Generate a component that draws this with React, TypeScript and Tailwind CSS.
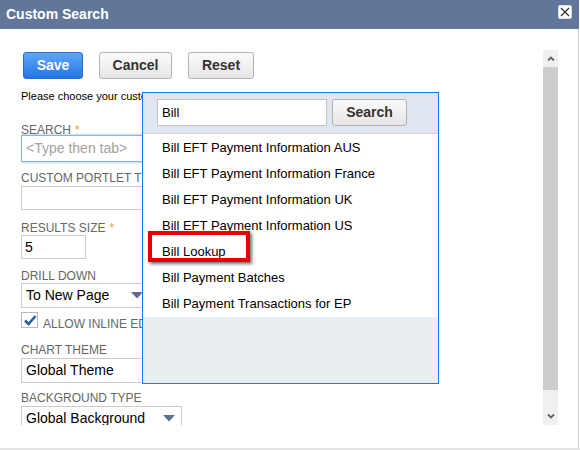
import React from "react";

const Label = ({ children, star = false, className = "" }: { children: React.ReactNode; star?: boolean; className?: string }) => (
  <div className={`text-[12px] leading-[12px] text-[#666666] uppercase whitespace-nowrap ${className}`}>
    {children}
    {star && <span className="text-[#e6a020] ml-[4px]">*</span>}
  </div>
);

const Arrow = () => (
  <svg width="12" height="7" viewBox="0 0 12 7" className="shrink-0">
    <path d="M0 0 L12 0 L6 6.5 Z" fill="#5b7090" />
  </svg>
);

const Select = ({ value, width, className = "" }: { value: string; width: string; className?: string }) => (
  <div className={`${width} h-[25px] border border-[#cccccc] bg-white flex items-center justify-between pl-[4px] pr-[6px] text-[14px] text-black ${className}`}>
    <span className="whitespace-nowrap">{value}</span>
    <Arrow />
  </div>
);

const items = [
  "Bill EFT Payment Information AUS",
  "Bill EFT Payment Information France",
  "Bill EFT Payment Information UK",
  "Bill EFT Payment Information US",
  "Bill Lookup",
  "Bill Payment Batches",
  "Bill Payment Transactions for EP",
];

export default function App() {
  return (
    <div className="w-[580px] h-[450px] bg-white overflow-hidden flex flex-col font-['Liberation_Sans',Arial,sans-serif]">
      <div className="w-[579px] h-[448px] flex flex-col">
        <div className="h-[29px] shrink-0 bg-[#607799] flex justify-between pl-[6px] pr-[7px]">
          <span className="text-white font-bold text-[14px] leading-[29px]">Custom Search</span>
          <div className="mt-[5px] w-[14px] h-[14px] bg-white rounded-[2px] border border-[#d8dde5] flex items-center justify-center">
            <svg width="10" height="10" viewBox="0 0 10 10">
              <path d="M1 1 L9 9 M9 1 L1 9" stroke="#333" strokeWidth="1.3" />
            </svg>
          </div>
        </div>
        <div className="flex-1 border-r border-[#cfcfcf] flex pt-[21px] pl-[21px] pr-[20px] relative">
          <div className="flex-1 h-[375px] overflow-hidden">
            <div className="flex gap-[16px] mt-[2px] ml-[2px]">
              <button className="w-[60px] h-[27px] rounded-[3px] border border-[#2a6cd0] bg-gradient-to-b from-[#5ea6f8] to-[#2476e6] text-white font-bold text-[14px]">
                Save
              </button>
              <button className="w-[73px] h-[27px] rounded-[3px] border border-[#b5b5b5] bg-gradient-to-b from-[#fbfbfb] to-[#e6e6e6] text-[#333] font-bold text-[14px]">
                Cancel
              </button>
              <button className="w-[66px] h-[27px] rounded-[3px] border border-[#b5b5b5] bg-gradient-to-b from-[#fbfbfb] to-[#e6e6e6] text-[#333] font-bold text-[14px]">
                Reset
              </button>
            </div>
            <div className="mt-[11px] text-[11px] leading-[13px] text-black whitespace-nowrap">
              Please choose your custom search form below.
            </div>

            <Label star className="mt-[21px]">Search</Label>
            <div className="mt-[-1px] w-[300px] h-[27px] border border-[#86b4ea] shadow-[0_0_3px_#8fbcf0] bg-white flex items-center pl-[4px] text-[14px] text-[#a3a3a3]">
              &lt;Type then tab&gt;
            </div>

            <Label className="mt-[10px]">Custom Portlet Title</Label>
            <div className="mt-[2px] w-[300px] h-[24px] border border-[#cccccc] bg-white" />

            <Label star className="mt-[12px]">Results Size</Label>
            <div className="mt-[1px] w-[65px] h-[24px] border border-[#cccccc] bg-white flex items-center pl-[3px] text-[14px] text-black">
              5
            </div>

            <Label className="mt-[11px]">Drill Down</Label>
            <Select value="To New Page" width="w-[129px]" className="mt-[1px]" />

            <div className="mt-[4px] h-[16px] flex">
              <div className="w-[17px] h-[16px] border border-[#b8b8b8] bg-white flex items-center justify-center">
                <svg width="14" height="12" viewBox="0 0 14 12">
                  <path d="M2 6.5 L5.5 10 L12.5 2" stroke="#2462a8" strokeWidth="2.6" fill="none" />
                </svg>
              </div>
              <Label className="ml-[5px] mt-[6px]">Allow Inline Editing</Label>
            </div>

            <Label className="mt-[16px]">Chart Theme</Label>
            <Select value="Global Theme" width="w-[200px]" className="mt-[2px]" />

            <Label className="mt-[9px]">Background Type</Label>
            <Select value="Global Background" width="w-[161px]" className="mt-[2px]" />
          </div>

          <div className="w-[15px] h-[375px] flex flex-col bg-[#f0f0f0]">
            <div className="h-[17px] flex items-center justify-center">
              <svg width="8" height="5" viewBox="0 0 8 5">
                <path d="M1 4.5 L4 1.5 L7 4.5" stroke="#606060" strokeWidth="1.8" fill="none" />
              </svg>
            </div>
            <div className="h-[323px] bg-[#cdcdcd]" />
            <div className="flex-1" />
            <div className="h-[17px] flex items-center justify-center">
              <svg width="8" height="5" viewBox="0 0 8 5">
                <path d="M1 0.5 L4 3.5 L7 0.5" stroke="#606060" strokeWidth="1.8" fill="none" />
              </svg>
            </div>
          </div>

          <div className="absolute left-[142px] top-[63px] w-[297px] h-[292px] border border-[#1a7ae8] bg-white flex flex-col">
            <div className="h-[41px] shrink-0 bg-[#dfe6ef] border-b border-[#cdd6e1] flex pt-[6px] pl-[14px] gap-[5px]">
              <div className="w-[170px] h-[27px] border border-[#c4c4c4] bg-white flex items-center pl-[4px] text-[13px] text-black">
                Bill
              </div>
              <button className="w-[75px] h-[27px] rounded-[3px] border border-[#b3b3b3] bg-gradient-to-b from-[#fafafa] to-[#e6e6e6] text-[#333] font-bold text-[14px]">
                Search
              </button>
            </div>
            <div className="flex flex-col pt-[1px]">
              {items.map((it) => (
                <div key={it} className="h-[26px] flex items-center pl-[19px] text-[13px] text-black whitespace-nowrap">
                  {it}
                </div>
              ))}
            </div>
            <div className="flex-1 bg-[#e9eef2]" />
            <div className="absolute left-[5px] top-[138px] w-[102px] h-[31px] border-[4px] border-[#e60000] shadow-[2px_2px_3px_rgba(0,0,0,0.55)]" />
          </div>
        </div>
      </div>
      <div className="h-[2px] bg-[#e3e3e3]" />
    </div>
  );
}
